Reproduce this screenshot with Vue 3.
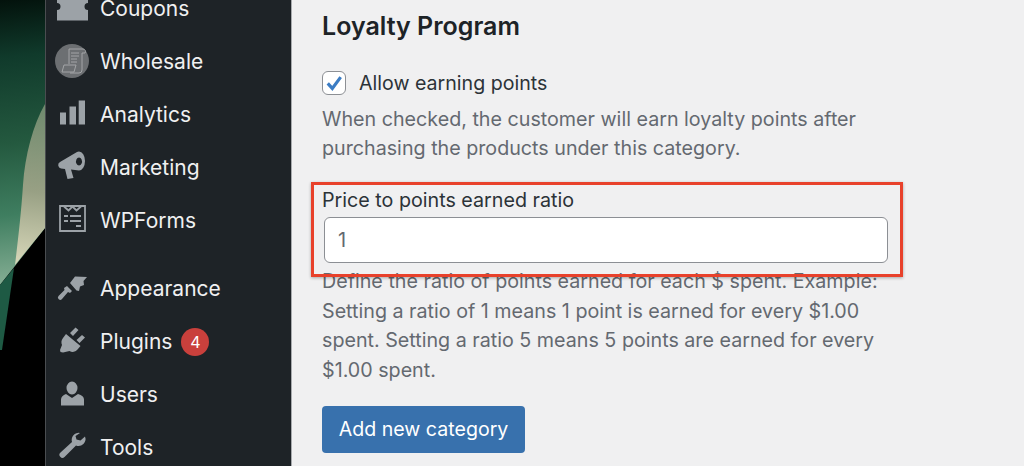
<template>
  <div class="screen">
    <svg class="wallpaper" viewBox="0 0 45 466" aria-hidden="true">
      <defs>
        <linearGradient id="wp-green" gradientUnits="userSpaceOnUse" x1="0" y1="0" x2="30" y2="285">
          <stop offset="0" stop-color="#03120c" />
          <stop offset="0.2" stop-color="#103a2b" />
          <stop offset="0.5" stop-color="#24593f" />
          <stop offset="0.75" stop-color="#3f7e60" />
          <stop offset="1" stop-color="#88b096" />
        </linearGradient>
        <linearGradient id="wp-pale" gradientUnits="userSpaceOnUse" x1="40" y1="104" x2="20" y2="262">
          <stop offset="0" stop-color="#6f8a6e" />
          <stop offset="0.55" stop-color="#98a084" />
          <stop offset="1" stop-color="#d6d6b8" />
        </linearGradient>
      </defs>
      <rect width="45" height="466" fill="#000" />
      <path d="M0 0H45V228L0 285Z" fill="url(#wp-green)" />
      <path d="M45 104C33 125 25 155 23 185C21 215 18 240 15 265L45 228Z" fill="url(#wp-pale)" />
      <path d="M0 285L14 268L2 350H0Z" fill="#1e5a44" />
    </svg>

    <nav class="sidebar">
      <ul class="menu">
        <li v-for="item in menu" :key="item.label" class="menu-item" :class="{ 'after-gap': item.gap }">
          <span class="menu-icon" :class="{ round: item.round }">
            <svg viewBox="0 0 34 34" width="34" height="34" aria-hidden="true">
              <path v-if="item.icon" :d="item.icon" fill-rule="evenodd" />
              <path v-if="item.lines" :d="item.lines" class="icon-lines" />
            </svg>
          </span>
          <span class="menu-label">{{ item.label }}</span>
          <span v-if="item.badge" class="badge">{{ item.badge }}</span>
        </li>
      </ul>
    </nav>

    <main class="content">
      <h2>Loyalty Program</h2>

      <label class="check-row">
        <span class="checkbox">
          <svg viewBox="0 0 24 24" width="20" height="20" aria-hidden="true">
            <path d="M4.5 12.5l5.5 6L20 5" fill="none" stroke="#3b7cc4" stroke-width="3.8" />
          </svg>
        </span>
        Allow earning points
      </label>
      <p class="hint first">When checked, the customer will earn loyalty points after purchasing the products under this category.</p>

      <div class="field">
        <label class="field-label">Price to points earned ratio</label>
        <input class="field-input" type="text" value="1" />
        <div class="highlight"></div>
      </div>
      <p class="hint second">Define the ratio of points earned for each $ spent. Example: Setting a ratio of 1 means 1 point is earned for every $1.00 spent. Setting a ratio 5 means 5 points are earned for every $1.00 spent.</p>

      <button class="add-btn">Add new category</button>
    </main>
  </div>
</template>

<script setup>
// icon paths are drawn in the 34x34 box each row gives them
const menu = [
  {
    label: 'Coupons',
    icon: 'M2 1.5H33V12a3.5 3.5 0 0 0 0 7V29.5H2V19a3.5 3.5 0 0 0 0-7Z',
  },
  {
    label: 'Wholesale',
    round: true,
    lines: 'M14 5H28a2.5 2.5 0 0 1 2 4H27V26a3 3 0 0 1-3 3H15M14 5V20M7 28L9 21H21L19 28ZM16 9H24M16 12H24M16 15H22M16 18H22',
  },
  {
    label: 'Analytics',
    icon: 'M5 15.5H11V27.5H5ZM14.5 9.5H21V27.5H14.5ZM23.7 3.5H30V27.5H23.7Z',
  },
  {
    label: 'Marketing',
    icon: 'M5 12L22 2A6 9.5 0 0 1 24 1.5 6 9.5 0 0 1 24 20.5L16 19.5 18.5 28 12.5 29 10 19 6 18.5A3.5 3.5 0 0 1 5 12ZM24 7.5A3 4 0 1 0 24.01 7.5Z',
  },
  {
    label: 'WPForms',
    lines: 'M5 3H30V28H5ZM9 3.5L13.5 7.5 17.5 3.5 21.5 7.5 26 3.5M9 13H13M15 13H26M9 18H13M15 18H26M21 23H26',
  },
  {
    label: 'Appearance',
    gap: true,
    icon: 'M15 11L20 4.5 32 5 28.5 9 29 13 25 14.5 24 19 21.5 18.5ZM12 14L17 19 15 21 13 20 7 27A2.2 2.2 0 0 1 3.5 24L9.5 18 9 16Z',
  },
  {
    label: 'Plugins',
    badge: 4,
    icon: 'M11 9L25.5 21 22.5 24.5A6 6 0 0 1 14.5 26L8 27.5 5.5 27 5 25 7 20A7 7 0 0 1 8 13ZM15 8L20.5 2.5 23.5 5 18 11ZM21.5 15L27 10 30 12.5 24.5 18Z',
  },
  {
    label: 'Users',
    icon: 'M17 3.5A5.5 6.5 0 1 1 17 16.5 5.5 6.5 0 0 1 17 3.5ZM11 16L17 20 23 16C27 17 29 19 29 21.5V27.5H6V21.5C6 19 8 17 11 16Z',
  },
  {
    label: 'Tools',
    icon: 'M25 2A7 7 0 0 0 17 11L5.5 21.5A3 3 0 0 0 9.5 26L21 14.5A7 7 0 0 0 30 5.5L25.5 9.5 21.5 8.5 20.5 5Z',
  },
]
</script>

<style scoped>
.screen {
  display: flex;
  width: 1024px;
  height: 466px;
  overflow: hidden;
  background: #f0f0f1;
  font-family: Inter, "Liberation Sans", sans-serif;
}

.wallpaper {
  flex: 0 0 45px;
  width: 45px;
  height: 466px;
}

.sidebar {
  flex: 0 0 247px;
  box-sizing: border-box;
  background: #1e2327;
  border-left: 1px solid #4a4d50;
  border-right: 1px solid #a7aaad;
}

.menu {
  list-style: none;
  margin: -18px 0 0;
  padding: 0 0 0 9px;
}

.menu-item {
  display: flex;
  align-items: center;
  height: 52.9px;
  color: #f0f0f1;
  font-size: 21px;
}

.menu-item.after-gap {
  margin-top: 16px;
}

.menu-icon {
  display: flex;
  flex: 0 0 34px;
  height: 34px;
  margin-right: 11px;
  border-radius: 50%;
  fill: #9ca2a7;
}

.menu-icon svg {
  overflow: visible;
}

.menu-icon.round {
  background: #6c6f72;
}

.icon-lines {
  fill: none;
  stroke: #9ca2a7;
  stroke-width: 1.8;
}

.round .icon-lines {
  stroke: #a3a5a7;
  stroke-width: 1;
}

.badge {
  display: flex;
  align-items: center;
  justify-content: center;
  width: 28px;
  height: 28px;
  margin-left: 9px;
  border-radius: 50%;
  background: #c9403c;
  color: #fff;
  font-size: 16px;
}

.content {
  flex: 1;
  padding: 11px 0 0 30px;
  color: #1d2327;
}

h2 {
  margin: 0;
  font-size: 25px;
  line-height: 30px;
  font-weight: 600;
}

.check-row {
  display: flex;
  align-items: center;
  margin-top: 30px;
  font-size: 19.6px;
  line-height: 24px;
  color: #2c3338;
}

.checkbox {
  display: flex;
  align-items: center;
  justify-content: center;
  box-sizing: border-box;
  width: 24px;
  height: 24px;
  margin-right: 13px;
  border: 1px solid #8c8f94;
  border-radius: 6px;
  background: #fff;
}

.hint {
  width: 566px;
  margin: 0;
  color: #646970;
  font-size: 19.7px;
  line-height: 29.6px;
}

.hint.first {
  margin-top: 9.5px;
}

.hint.second {
  margin-top: 4.5px;
}

.field {
  position: relative;
  width: 566px;
  margin-top: 24px;
}

.field-label {
  display: block;
  font-size: 19.7px;
  line-height: 24px;
  color: #2c3338;
}

.field-input {
  display: block;
  box-sizing: border-box;
  width: 564px;
  height: 46px;
  margin: 5px 0 0 2px;
  padding: 0 13px;
  border: 1px solid #8c8f94;
  border-radius: 6px;
  background: #fff;
  color: #646970;
  font: 20px Inter, "Liberation Sans", sans-serif;
}

.highlight {
  position: absolute;
  left: -11px;
  top: -6px;
  width: 592px;
  height: 95px;
  box-sizing: border-box;
  border: 3px solid #e8412b;
  box-shadow: 0 1px 3px rgba(0, 0, 0, 0.3);
  pointer-events: none;
}

.add-btn {
  display: block;
  width: 203px;
  height: 47px;
  margin-top: 20px;
  padding: 0;
  border: none;
  border-radius: 4px;
  background: #3871ad;
  color: #fff;
  font: 19.6px Inter, "Liberation Sans", sans-serif;
}
</style>
